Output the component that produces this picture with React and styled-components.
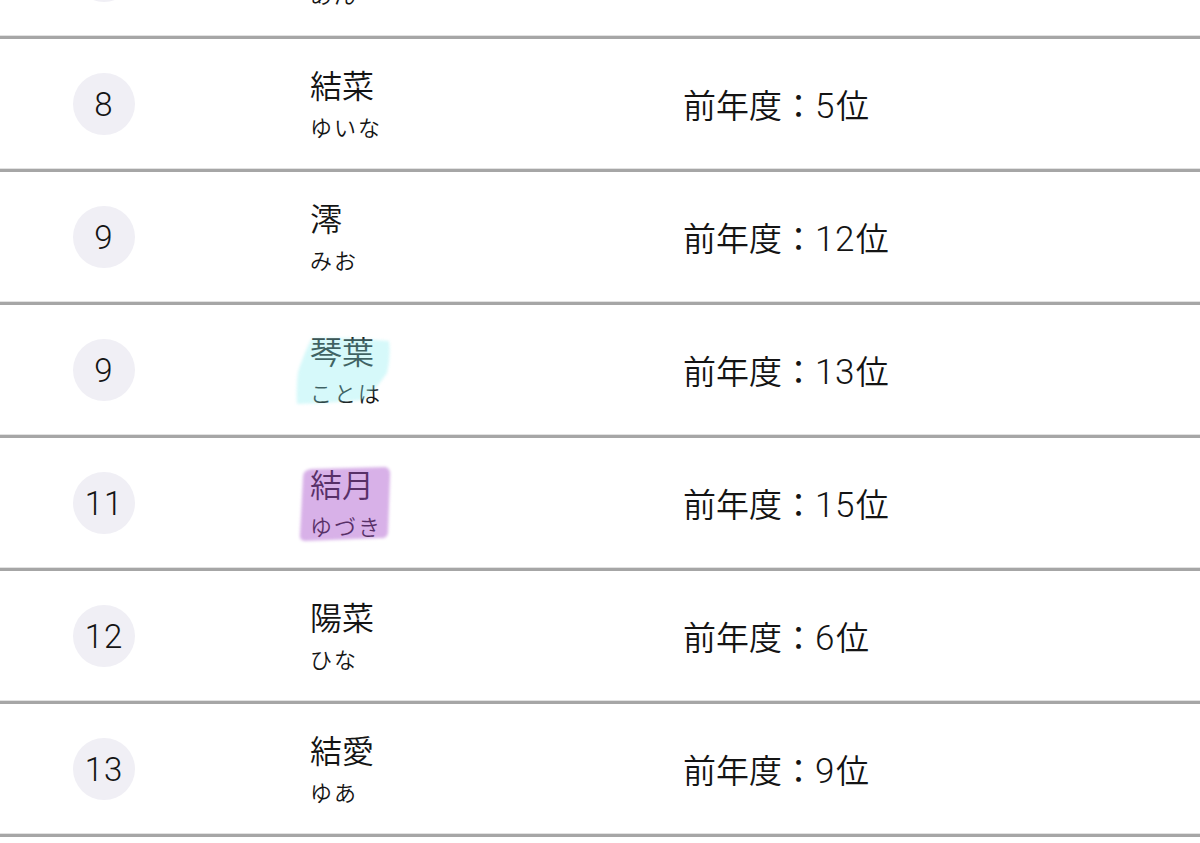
import React from 'react';
import styled, { createGlobalStyle } from 'styled-components';

const rankings = [
  { rank: 7, name: '杏', reading: 'あん', last: 3 },
  { rank: 8, name: '結菜', reading: 'ゆいな', last: 5 },
  { rank: 9, name: '澪', reading: 'みお', last: 12 },
  { rank: 9, name: '琴葉', reading: 'ことは', last: 13, mark: 'cyan' },
  { rank: 11, name: '結月', reading: 'ゆづき', last: 15, mark: 'purple' },
  { rank: 12, name: '陽菜', reading: 'ひな', last: 6 },
  { rank: 13, name: '結愛', reading: 'ゆあ', last: 9 },
];

function Marker({ kind }) {
  if (kind === 'cyan') {
    return (
      <MarkSvg width="120" height="130" viewBox="0 0 120 130">
        <path
          d="M22 33 Q60 32 99 36 Q101 52 97 68 Q86 84 74 95 Q40 98 7 99 Q6 82 8 67 Q14 48 22 33 Z"
          fill="rgb(140, 238, 240)"
          fillOpacity="0.36"
        />
      </MarkSvg>
    );
  }
  return (
    <MarkSvg width="120" height="130" viewBox="0 0 120 130">
      <path
        d="M21 31 L95 29 Q101 30 100 39 L98 95 Q97 101 90 100 L15 103 Q9 103 10 96 L13 39 Q13 32 21 31 Z"
        fill="rgb(168, 82, 204)"
        fillOpacity="0.45"
      />
    </MarkSvg>
  );
}

function RankRow({ item }) {
  return (
    <Row>
      <RankBadge>{item.rank}</RankBadge>
      <NameCell>
        <Name>{item.name}</Name>
        <Reading>{item.reading}</Reading>
        {item.mark && <Marker kind={item.mark} />}
      </NameCell>
      <LastYear>
        前年度<Colon>：</Colon>
        <Num>{item.last}</Num>位
      </LastYear>
    </Row>
  );
}

export default function App() {
  return (
    <>
      <GlobalStyle />
      <Page>
        <List>
          {rankings.map((item, i) => (
            <RankRow key={i} item={item} />
          ))}
        </List>
      </Page>
    </>
  );
}

const GlobalStyle = createGlobalStyle`
  html, body {
    margin: 0;
    padding: 0;
    background: #ffffff;
  }
  body {
    font-family: "Noto Sans CJK JP", "Noto Sans", sans-serif;
    color: #141414;
  }
`;

const Page = styled.div`
  width: 1200px;
  height: 843px;
  overflow: hidden;
  background: #ffffff;
`;

const List = styled.div`
  display: flex;
  flex-direction: column;
  margin-top: -94px;
`;

const Row = styled.div`
  display: grid;
  grid-template-columns: 237px 373px 1fr;
  align-items: center;
  height: 133px;
  box-sizing: border-box;
  padding-left: 73px;
  border-bottom: 3px solid #a6a6a6;
  box-shadow: inset 0 -1px 0 #e2e2e2;
`;

const RankBadge = styled.div`
  width: 62px;
  height: 62px;
  border-radius: 50%;
  background: #f0eff5;
  display: flex;
  align-items: center;
  justify-content: center;
  font-family: Roboto, "Liberation Sans", sans-serif;
  font-weight: 300;
  font-size: 33px;
  letter-spacing: 1px;
  color: #141414;
`;

const NameCell = styled.div`
  position: relative;
  height: 130px;
  display: flex;
  flex-direction: column;
  justify-content: center;
  gap: 9px;
  padding-bottom: 2px;
  box-sizing: border-box;
`;

const Name = styled.div`
  font-size: 32px;
  line-height: 36px;
  font-weight: 350;
`;

const Reading = styled.div`
  font-size: 22px;
  line-height: 30px;
  letter-spacing: 2px;
  font-weight: 350;
`;

const MarkSvg = styled.svg`
  position: absolute;
  left: -20px;
  top: 0;
  pointer-events: none;
  filter: blur(1.6px);
`;

const LastYear = styled.div`
  display: flex;
  align-items: baseline;
  font-size: 33px;
  font-weight: 350;
  color: #141414;
`;

const Colon = styled.span`
  display: inline-block;
  width: 33px;
  text-align: center;
`;

const Num = styled.span`
  font-family: Roboto, "Liberation Sans", sans-serif;
  font-weight: 300;
  font-size: 35px;
  letter-spacing: 0.5px;
  margin-right: 1px;
`;
